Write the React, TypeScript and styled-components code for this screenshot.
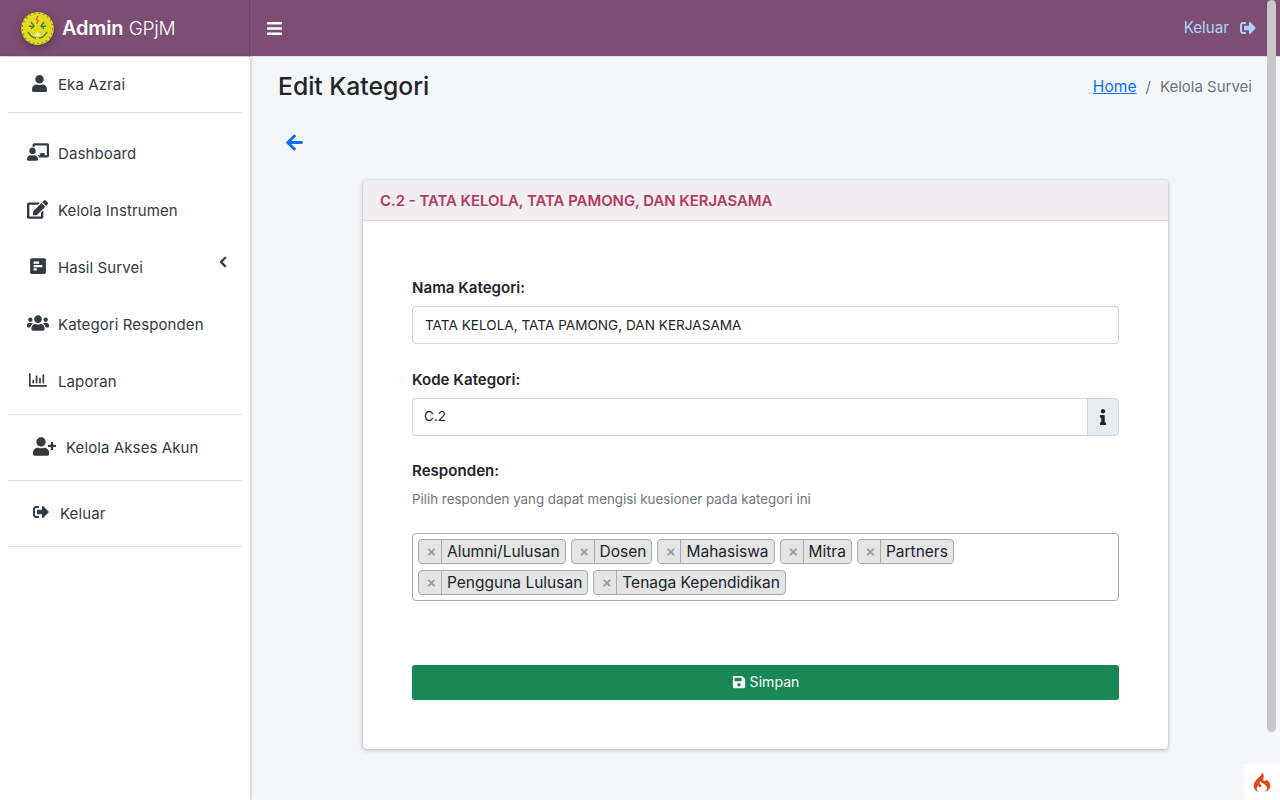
import React from "react";
import styled, { createGlobalStyle } from "styled-components";
import {
  FaUser, FaChalkboardTeacher, FaEdit, FaPollH, FaUsers, FaRegChartBar, FaUserPlus,
  FaSignOutAlt, FaBars, FaArrowLeft, FaInfo, FaSave, FaChevronLeft,
} from "react-icons/fa";
import { SiCodeigniter } from "react-icons/si";

const Global = createGlobalStyle`
  html, body { margin: 0; padding: 0; height: 800px; overflow: hidden; }
  body { font-family: Inter, "Noto Sans", sans-serif; color: #212529; background: #f4f6f9; }
  * { box-sizing: border-box; }
`;

const Page = styled.div`
  position: relative;
  width: 1280px;
  height: 800px;
  display: grid;
  grid-template-columns: 250px 1fr;
  grid-template-rows: 57px 1fr;
  overflow: hidden;
`;

const Brand = styled.div`
  background: #7d4d74;
  display: flex;
  align-items: center;
  padding-left: 21px;
  gap: 8px;
  color: #fff;
  font-size: 20px;
  border-right: 1px solid #6f4467;
  border-bottom: 1px solid #dee2e6;
  letter-spacing: -0.2px;
  b { font-weight: 600; }
  span { font-weight: 300; font-size: 19px; }
`;

const LogoWrap = styled.svg`
  width: 33px;
  height: 33px;
  border-radius: 50%;
  box-shadow: 0 3px 8px rgba(0, 0, 0, 0.3);
  flex: none;
`;

const TopBar = styled.div`
  background: #7d4d74;
  border-bottom: 1px solid #dee2e6;
  display: flex;
  align-items: center;
  justify-content: space-between;
  padding: 0 24px 0 16px;
  color: #fff;
  font-size: 16px;
`;

const Logout = styled.div`
  display: flex;
  align-items: center;
  gap: 11px;
  color: #a9d6f8;
  font-size: 15.2px;
  margin-top: -1px;
`;

const Sidebar = styled.aside`
  background: #fff;
  box-shadow: 1px 0 3px rgba(0, 0, 0, 0.2);
  padding: 0 8px;
  display: flex;
  flex-direction: column;
  font-size: 15px;
  letter-spacing: 0.1px;
  color: #343a40;
  position: relative;
  z-index: 1;
`;

const Divider = styled.hr`
  margin: 0;
  border: 0;
  border-top: 1px solid #dee2e6;
`;

const SideRow = styled.div<{ $h: number; $pad: number; $gap: number }>`
  height: ${(p) => p.$h}px;
  display: flex;
  align-items: center;
  padding-left: ${(p) => p.$pad}px;
  gap: ${(p) => p.$gap}px;
  position: relative;
  white-space: nowrap;
`;

const IconBox = styled.span`
  width: 23px;
  display: flex;
  justify-content: center;
  align-items: center;
  flex: none;
  margin-top: -3px;
`;

const NavList = styled.div`
  display: flex;
  flex-direction: column;
  padding-top: 12px;
  padding-bottom: 4px;
`;

const Caret = styled.span`
  position: absolute;
  left: 209px;
  top: 17px;
  display: flex;
  font-size: 12px;
  svg { stroke: currentColor; stroke-width: 30px; }
`;

const Main = styled.main`
  padding: 0 28px;
  display: flex;
  flex-direction: column;
`;

const Head = styled.div`
  display: flex;
  justify-content: space-between;
  align-items: center;
  height: 58px;
`;

const Title = styled.h1`
  margin: 0;
  font-size: 24.7px;
  font-weight: 500;
  color: #212529;
`;

const Crumbs = styled.div`
  font-size: 15px;
  color: #6c757d;
  display: flex;
  align-items: baseline;
  gap: 9px;
  a { color: #0d6efd; text-decoration: underline; font-size: 15.6px; }
`;

const Back = styled.div`
  margin-top: 18px;
  padding-left: 7px;
  height: 47px;
  color: #0d6efd;
  font-size: 19px;
  display: flex;
  align-items: flex-start;
`;

const Card = styled.section`
  margin-left: 85px;
  width: 805px;
  height: 569px;
  background: #fff;
  border-radius: 4px;
  box-shadow: 0 0 1px rgba(0, 0, 0, 0.3), 0 1px 4px rgba(0, 0, 0, 0.25);
  overflow: hidden;
`;

const CardHead = styled.div`
  height: 41px;
  background: #f2edf1;
  border-bottom: 1px solid #d9d9dd;
  padding: 1px 0 0 17px;
  display: flex;
  align-items: center;
  color: #b23b5e;
  font-weight: 600;
  font-size: 14.9px;
`;

const Form = styled.div`
  padding: 0 49px;
  display: flex;
  flex-direction: column;
`;

const Label = styled.label<{ $top: number }>`
  display: block;
  margin-top: ${(p) => p.$top}px;
  font-size: 15.1px;
  font-weight: 600;
  line-height: 20px;
  color: #212529;
`;

const Input = styled.div`
  margin-top: 8px;
  height: 38px;
  border: 1px solid #ced4da;
  border-radius: 4px;
  display: flex;
  align-items: center;
  padding-left: 12px;
  font-size: 13.6px;
  color: #212529;
  background: #fff;
`;

const Group = styled.div`
  margin-top: 8px;
  height: 38px;
  display: flex;
`;

const GroupInput = styled.div`
  flex: 1;
  border: 1px solid #ced4da;
  border-right: 0;
  border-radius: 4px 0 0 4px;
  display: flex;
  align-items: center;
  padding-left: 11px;
  font-size: 13.6px;
  padding-bottom: 2px;
`;

const Addon = styled.div`
  width: 32px;
  background: #e9ecef;
  border: 1px solid #ced4da;
  border-radius: 0 4px 4px 0;
  display: flex;
  align-items: center;
  justify-content: center;
  font-size: 16px;
  color: #212529;
`;

const Help = styled.div`
  margin-top: 9px;
  font-size: 13.35px;
  line-height: 18px;
  color: #6c757d;
`;

const Select = styled.div`
  margin-top: 25px;
  height: 68px;
  border: 1px solid #aaa;
  border-radius: 4px;
  padding: 5px;
  display: flex;
  flex-wrap: wrap;
  align-content: flex-start;
  row-gap: 6px;
  column-gap: 5px;
`;

const Tag = styled.div`
  height: 25px;
  background: #e4e4e4;
  border: 1px solid #aaa;
  border-radius: 4px;
  display: flex;
  align-items: center;
  font-size: 15.5px;
  color: #212529;
  padding-right: 5px;
`;

const TagX = styled.span`
  width: 23px;
  padding-left: 3px;
  align-self: stretch;
  border-right: 1px solid #aaa;
  margin-right: 5px;
  color: #999;
  font-weight: 700;
  font-size: 15px;
  font-family: "Liberation Sans", sans-serif;
  display: flex;
  align-items: center;
  justify-content: center;
`;

const SaveBtn = styled.button`
  margin-top: 64px;
  height: 35px;
  width: 100%;
  border: 0;
  border-radius: 3px;
  background: #198754;
  color: #fff;
  font-family: inherit;
  font-size: 14.1px;
  padding: 0 0 2px;
  display: flex;
  align-items: center;
  justify-content: center;
  gap: 4px;
`;

const Scrollbar = styled.div`
  position: absolute;
  top: 0;
  right: 4px;
  width: 9px;
  height: 732px;
  background: #c8c8c8;
  border-radius: 5px;
  z-index: 3;
`;

const Corner = styled.div`
  position: absolute;
  right: 0;
  bottom: 0;
  width: 36px;
  height: 36px;
  background: #fff;
  display: flex;
  align-items: center;
  justify-content: center;
  color: #dd4814;
  font-size: 20px;
  z-index: 3;
`;

const Logo = () => (
  <LogoWrap viewBox="0 0 33 33">
    <circle cx="16.5" cy="16.5" r="16.5" fill="#e5d81d" />
    <circle cx="16.5" cy="16.5" r="15.2" fill="none" stroke="#3d8f3a" strokeWidth="1.2" strokeDasharray="1.5 3" />
    <path d="M17 4l-2 3.5 2.5 1-2 3.5" fill="none" stroke="#d8342a" strokeWidth="1" />
    <path d="M10 10l3 4-3 3M8 14l5 1M23 10l-3 4 3 3M25 14l-5 1M7 20c3 5 6 6 8 6M26 20c-3 5-6 6-8 6" fill="none" stroke="#238a3f" strokeWidth="1.3" />
    <path d="M13.5 24l3-4 3 4z" fill="#f2f2ea" />
  </LogoWrap>
);

const nav = [
  { icon: <FaChalkboardTeacher size={22} />, text: "Dashboard" },
  { icon: <FaEdit size={21} />, text: "Kelola Instrumen" },
  { icon: <FaPollH size={18} />, text: "Hasil Survei", caret: true },
  { icon: <FaUsers size={22} />, text: "Kategori Responden" },
  { icon: <FaRegChartBar size={18} />, text: "Laporan" },
];

const tags = ["Alumni/Lulusan", "Dosen", "Mahasiswa", "Mitra", "Partners", "Pengguna Lulusan", "Tenaga Kependidikan"];

export default function App() {
  return (
    <>
      <Global />
      <Page>
        <Brand>
          <Logo />
          <div><b>Admin</b> <span>GPjM</span></div>
        </Brand>
        <TopBar>
          <FaBars size={17} />
          <Logout>
            Keluar <FaSignOutAlt size={16} />
          </Logout>
        </TopBar>
        <Sidebar>
          <SideRow $h={55} $pad={20} $gap={7}>
            <IconBox><FaUser size={17} /></IconBox>
            Eka Azrai
          </SideRow>
          <Divider />
          <NavList>
            {nav.map((n) => (
              <SideRow key={n.text} $h={57} $pad={18} $gap={9}>
                <IconBox>{n.icon}</IconBox>
                {n.text}
                {n.caret && <Caret><FaChevronLeft /></Caret>}
              </SideRow>
            ))}
          </NavList>
          <Divider />
          <SideRow $h={65} $pad={25} $gap={10}>
            <IconBox><FaUserPlus size={25} /></IconBox>
            Kelola Akses Akun
          </SideRow>
          <Divider />
          <SideRow $h={65} $pad={21} $gap={8}>
            <IconBox><FaSignOutAlt size={16} /></IconBox>
            Keluar
          </SideRow>
          <Divider />
        </Sidebar>
        <Main>
          <Head>
            <Title>Edit Kategori</Title>
            <Crumbs><a>Home</a><span>/</span><span>Kelola Survei</span></Crumbs>
          </Head>
          <Back><FaArrowLeft /></Back>
          <Card>
            <CardHead>C.2 - TATA KELOLA, TATA PAMONG, DAN KERJASAMA</CardHead>
            <Form>
              <Label $top={57}>Nama Kategori:</Label>
              <Input>TATA KELOLA, TATA PAMONG, DAN KERJASAMA</Input>
              <Label $top={26}>Kode Kategori:</Label>
              <Group>
                <GroupInput>C.2</GroupInput>
                <Addon><FaInfo /></Addon>
              </Group>
              <Label $top={25}>Responden:</Label>
              <Help>Pilih responden yang dapat mengisi kuesioner pada kategori ini</Help>
              <Select>
                {tags.map((t) => (
                  <Tag key={t}><TagX>×</TagX>{t}</Tag>
                ))}
              </Select>
              <SaveBtn><FaSave size={14} /> Simpan</SaveBtn>
            </Form>
          </Card>
        </Main>
        <Scrollbar />
        <Corner><SiCodeigniter /></Corner>
      </Page>
    </>
  );
}
